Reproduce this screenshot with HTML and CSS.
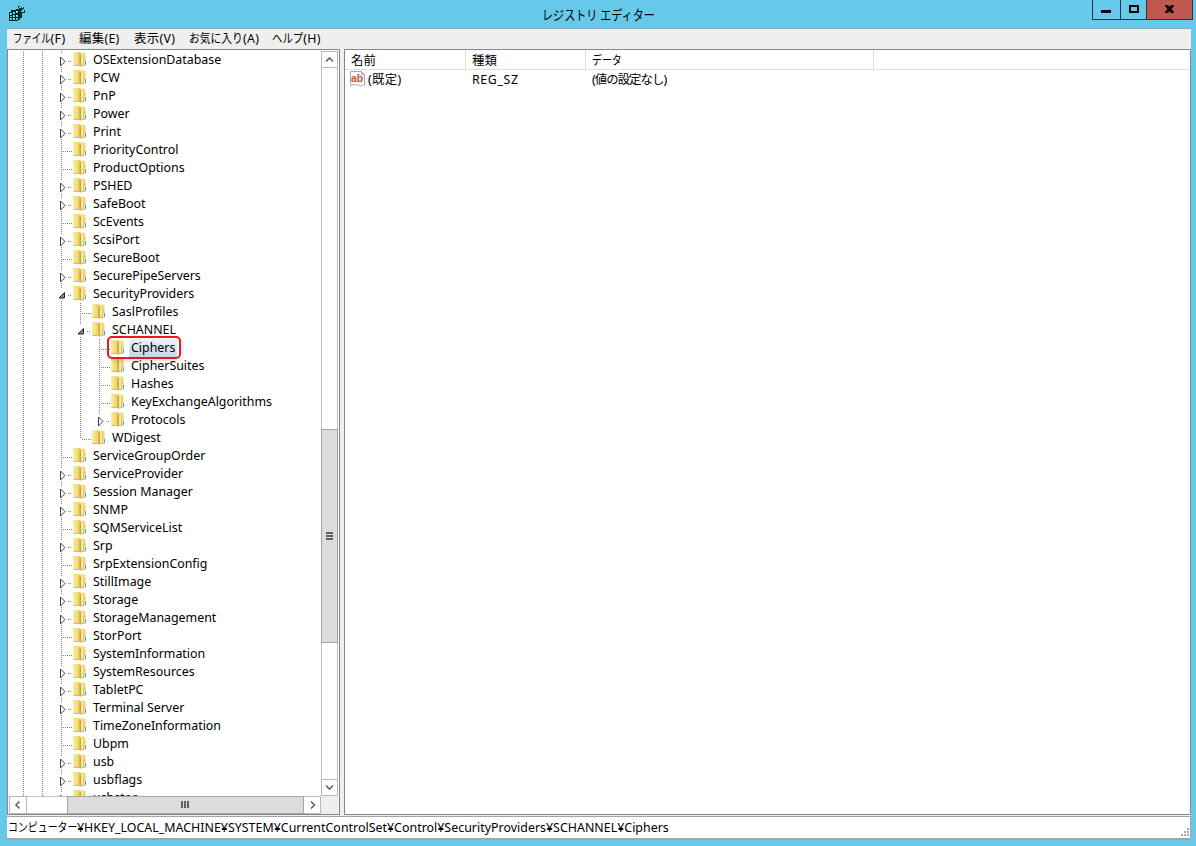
FILE: index.html
```html
<!DOCTYPE html>
<html lang="ja">
<head>
<meta charset="utf-8">
<title>レジストリ エディター</title>
<link rel="stylesheet" href="styles.css">
</head>
<body>
<svg class="defs" aria-hidden="true">
  <defs>
    <linearGradient id="gold" x1="0" x2="1"><stop offset="0" stop-color="#fcf0a4"/><stop offset="1" stop-color="#e6c95f"/></linearGradient>
    <linearGradient id="goldDark" x1="0" x2="0" y1="0" y2="1"><stop offset="0" stop-color="#f2e08a"/><stop offset="1" stop-color="#dab94c"/></linearGradient>
  </defs>
  <symbol id="folder" viewBox="0 0 16 16">
    <path d="M6 1.500h5.500l1 1v12H6z" fill="url(#goldDark)"/>
    <path d="M0 1.500 1 1h5l1.500 1v13L6 15H1l-1-.5z" fill="url(#gold)"/>
    <path d="M6.500 2.500 8 4v11l-1.500.5z" fill="#c9a638"/>
    <path d="M8 4.500 10 3v12l-2 .5z" fill="#f6e9a0"/>
    <path d="M.5 14.500h6l1 .5 5-1" fill="none" stroke="#d9bb58"/>
    <path d="M11 9.500h2v5h-2z" fill="#dcecf2"/><path d="M12 10h1v4h-1z" fill="#4b9fd8"/>
  </symbol>
  <symbol id="closed" viewBox="0 0 19 18"><path d="M8.500 6v9l4.500-4.500z" fill="#fff" stroke="#404040"/></symbol>
  <symbol id="open" viewBox="0 0 19 18"><path d="M12.500 7.500v5.500h-5.500z" fill="#888" stroke="#262626"/></symbol>
</svg>
<div class="window">
  <header class="titlebar">
    <svg class="app-icon" viewBox="0 0 17 17" shape-rendering="crispEdges">
      <path d="M1 7h2V5h5V4h3V3h3v4h2V5h1v3h-3v5h-2v2h-2v1H1z" fill="#06262d"/>
      <path d="M2 8h2v2H2zM5 7h2v2H5zM8 6h2v2H8zM2 11h2v1H2zM2 13h2v2H2zM5 10h2v2H5zM5 13h2v2H5zM8 10h2v2H8zM8 13h2v2H8z" fill="#32d4d0"/>
      <path d="M2 8h1v1H2zM5 7h1v1H5zM8 6h1v1H8zM2 13h1v1H2zM5 11h1v1H5zM8 10h1v1H8zM5 13h1v1H5z" fill="#fff"/>
      <path d="M10 1h2v2h-2zM13 2h3v2h-3zM11 4h4v1h-4z" fill="#123d48"/><path d="M11 2h1v1h-1zM14 2h1v1h-1zM13 6h1v1h-1z" fill="#9ee"/>
    </svg>
    <h1 class="title">レジストリ エディター</h1>
    <div class="controls">
      <span class="control"><svg viewBox="0 0 27 19"><path d="M8 10h10v3H8z"/></svg></span>
      <span class="control control-max"><svg viewBox="0 0 25 19"><path d="M8 5h10v8H8zM10 7v4h6V7z" fill-rule="evenodd"/></svg></span>
      <span class="control control-close"><svg viewBox="0 0 45 19"><path d="M18 5h3l1.500 2L24 5h3v1l-2.500 3 2.500 3v1h-3l-1.500-2-1.500 2h-3v-1l2.500-3L18 6z"/></svg></span>
    </div>
  </header>
  <div class="client">
    <nav class="menu">
      <span class="m-file"><b class="kana">ファイル</b>(F)</span><span class="m-edit">編集(E)</span><span class="m-view">表示(V)</span><span class="m-fav"><b class="kana">お気に入り</b>(A)</span><span class="m-help"><b class="kana">ヘルプ</b>(H)</span>
    </nav>
    <main class="panes">
      <section class="tree-pane">
        <div class="tree">
          <div class="row"><i class="v"></i><i class="v"></i><svg class="x"><use href="#closed"/></svg><svg class="f"><use href="#folder"/></svg><span>OSExtensionDatabase</span></div>
          <div class="row"><i class="v"></i><i class="v"></i><svg class="x"><use href="#closed"/></svg><svg class="f"><use href="#folder"/></svg><span>PCW</span></div>
          <div class="row"><i class="v"></i><i class="v"></i><svg class="x"><use href="#closed"/></svg><svg class="f"><use href="#folder"/></svg><span>PnP</span></div>
          <div class="row"><i class="v"></i><i class="v"></i><svg class="x"><use href="#closed"/></svg><svg class="f"><use href="#folder"/></svg><span>Power</span></div>
          <div class="row"><i class="v"></i><i class="v"></i><svg class="x"><use href="#closed"/></svg><svg class="f"><use href="#folder"/></svg><span>Print</span></div>
          <div class="row"><i class="v"></i><i class="v"></i><i class="v t"></i><svg class="f"><use href="#folder"/></svg><span>PriorityControl</span></div>
          <div class="row"><i class="v"></i><i class="v"></i><i class="v t"></i><svg class="f"><use href="#folder"/></svg><span>ProductOptions</span></div>
          <div class="row"><i class="v"></i><i class="v"></i><svg class="x"><use href="#closed"/></svg><svg class="f"><use href="#folder"/></svg><span>PSHED</span></div>
          <div class="row"><i class="v"></i><i class="v"></i><svg class="x"><use href="#closed"/></svg><svg class="f"><use href="#folder"/></svg><span>SafeBoot</span></div>
          <div class="row"><i class="v"></i><i class="v"></i><i class="v t"></i><svg class="f"><use href="#folder"/></svg><span>ScEvents</span></div>
          <div class="row"><i class="v"></i><i class="v"></i><svg class="x"><use href="#closed"/></svg><svg class="f"><use href="#folder"/></svg><span>ScsiPort</span></div>
          <div class="row"><i class="v"></i><i class="v"></i><i class="v t"></i><svg class="f"><use href="#folder"/></svg><span>SecureBoot</span></div>
          <div class="row"><i class="v"></i><i class="v"></i><svg class="x"><use href="#closed"/></svg><svg class="f"><use href="#folder"/></svg><span>SecurePipeServers</span></div>
          <div class="row"><i class="v"></i><i class="v"></i><svg class="x"><use href="#open"/></svg><svg class="f"><use href="#folder"/></svg><span>SecurityProviders</span></div>
          <div class="row"><i class="v"></i><i class="v"></i><i class="v"></i><i class="v t"></i><svg class="f"><use href="#folder"/></svg><span>SaslProfiles</span></div>
          <div class="row"><i class="v"></i><i class="v"></i><i class="v"></i><svg class="x"><use href="#open"/></svg><svg class="f"><use href="#folder"/></svg><span>SCHANNEL</span></div>
          <div class="row selected"><i class="v"></i><i class="v"></i><i class="v"></i><i class="v"></i><i class="v t"></i><svg class="f"><use href="#folder"/></svg><span>Ciphers</span></div>
          <div class="row"><i class="v"></i><i class="v"></i><i class="v"></i><i class="v"></i><i class="v t"></i><svg class="f"><use href="#folder"/></svg><span>CipherSuites</span></div>
          <div class="row"><i class="v"></i><i class="v"></i><i class="v"></i><i class="v"></i><i class="v t"></i><svg class="f"><use href="#folder"/></svg><span>Hashes</span></div>
          <div class="row"><i class="v"></i><i class="v"></i><i class="v"></i><i class="v"></i><i class="v t"></i><svg class="f"><use href="#folder"/></svg><span>KeyExchangeAlgorithms</span></div>
          <div class="row"><i class="v"></i><i class="v"></i><i class="v"></i><i class="v"></i><svg class="x last"><use href="#closed"/></svg><svg class="f"><use href="#folder"/></svg><span>Protocols</span></div>
          <div class="row"><i class="v"></i><i class="v"></i><i class="v"></i><i class="l t"></i><svg class="f"><use href="#folder"/></svg><span>WDigest</span></div>
          <div class="row"><i class="v"></i><i class="v"></i><i class="v t"></i><svg class="f"><use href="#folder"/></svg><span>ServiceGroupOrder</span></div>
          <div class="row"><i class="v"></i><i class="v"></i><svg class="x"><use href="#closed"/></svg><svg class="f"><use href="#folder"/></svg><span>ServiceProvider</span></div>
          <div class="row"><i class="v"></i><i class="v"></i><svg class="x"><use href="#closed"/></svg><svg class="f"><use href="#folder"/></svg><span>Session Manager</span></div>
          <div class="row"><i class="v"></i><i class="v"></i><svg class="x"><use href="#closed"/></svg><svg class="f"><use href="#folder"/></svg><span>SNMP</span></div>
          <div class="row"><i class="v"></i><i class="v"></i><i class="v t"></i><svg class="f"><use href="#folder"/></svg><span>SQMServiceList</span></div>
          <div class="row"><i class="v"></i><i class="v"></i><svg class="x"><use href="#closed"/></svg><svg class="f"><use href="#folder"/></svg><span>Srp</span></div>
          <div class="row"><i class="v"></i><i class="v"></i><i class="v t"></i><svg class="f"><use href="#folder"/></svg><span>SrpExtensionConfig</span></div>
          <div class="row"><i class="v"></i><i class="v"></i><svg class="x"><use href="#closed"/></svg><svg class="f"><use href="#folder"/></svg><span>StillImage</span></div>
          <div class="row"><i class="v"></i><i class="v"></i><svg class="x"><use href="#closed"/></svg><svg class="f"><use href="#folder"/></svg><span>Storage</span></div>
          <div class="row"><i class="v"></i><i class="v"></i><svg class="x"><use href="#closed"/></svg><svg class="f"><use href="#folder"/></svg><span>StorageManagement</span></div>
          <div class="row"><i class="v"></i><i class="v"></i><i class="v t"></i><svg class="f"><use href="#folder"/></svg><span>StorPort</span></div>
          <div class="row"><i class="v"></i><i class="v"></i><i class="v t"></i><svg class="f"><use href="#folder"/></svg><span>SystemInformation</span></div>
          <div class="row"><i class="v"></i><i class="v"></i><svg class="x"><use href="#closed"/></svg><svg class="f"><use href="#folder"/></svg><span>SystemResources</span></div>
          <div class="row"><i class="v"></i><i class="v"></i><svg class="x"><use href="#closed"/></svg><svg class="f"><use href="#folder"/></svg><span>TabletPC</span></div>
          <div class="row"><i class="v"></i><i class="v"></i><svg class="x"><use href="#closed"/></svg><svg class="f"><use href="#folder"/></svg><span>Terminal Server</span></div>
          <div class="row"><i class="v"></i><i class="v"></i><i class="v t"></i><svg class="f"><use href="#folder"/></svg><span>TimeZoneInformation</span></div>
          <div class="row"><i class="v"></i><i class="v"></i><i class="v t"></i><svg class="f"><use href="#folder"/></svg><span>Ubpm</span></div>
          <div class="row"><i class="v"></i><i class="v"></i><svg class="x"><use href="#closed"/></svg><svg class="f"><use href="#folder"/></svg><span>usb</span></div>
          <div class="row"><i class="v"></i><i class="v"></i><svg class="x"><use href="#closed"/></svg><svg class="f"><use href="#folder"/></svg><span>usbflags</span></div>
          <div class="row"><i class="v"></i><i class="v"></i><svg class="x"><use href="#closed"/></svg><svg class="f"><use href="#folder"/></svg><span>usbstor</span></div>
        </div>
        <div class="vscroll">
          <span class="btn"><svg viewBox="0 0 15 15"><path d="m4 9.500 3.500-3.500L11 9.500"/></svg></span>
          <span class="thumb"><svg viewBox="0 0 15 15"><path d="M4 4h7M4 7h7M4 10h7"/></svg></span>
          <span class="btn"><svg viewBox="0 0 15 15"><path d="m4 5.500 3.500 3.500L11 5.500"/></svg></span>
        </div>
        <div class="hscroll">
          <span class="btn"><svg viewBox="0 0 15 15"><path d="M8.500 3.500 5 7l3.500 3.500"/></svg></span>
          <span class="thumb"><svg viewBox="0 0 15 15"><path d="M4 3v7M7 3v7M10 3v7"/></svg></span>
          <span class="btn"><svg viewBox="0 0 15 15"><path d="M6 3.500 9.500 7 6 10.500"/></svg></span>
        </div>
        <div class="corner"></div>
      </section>
      <section class="list-pane">
        <div class="list-row list-head"><span>名前</span><span>種類</span><span><b class="kana">データ</b></span></div>
        <div class="list-row list-item">
          <span><svg class="value-icon" viewBox="0 0 16 16"><path d="M.5.5h11l3 3v11l-2-1-2 2-2-2-2 1-2-1-4 1z" fill="#fafafa" stroke="#aaa"/><path d="M11.500.5v3h3" fill="none" stroke="#aaa"/><text x="1" y="11">ab</text></svg>(既定)</span>
          <span class="type">REG_SZ</span><span><b class="unset">(値の設定なし)</b></span>
        </div>
      </section>
    </main>
    <footer class="status"><span class="kana">コンピューター</span><span class="status-path">¥HKEY_LOCAL_MACHINE¥SYSTEM¥CurrentControlSet¥Control¥SecurityProviders¥SCHANNEL¥Ciphers</span>
      <svg class="grip" viewBox="0 0 9 9" shape-rendering="crispEdges"><path d="M6 0h2v2H6zM3 3h2v2H3zM6 3h2v2H6zM0 6h2v2H0zM3 6h2v2H3zM6 6h2v2H6z" fill="#aaa"/></svg>
    </footer>
  </div>
</div>
</body>
</html>
```
FILE: styles.css
```css
*, *::before, *::after { box-sizing: border-box; }
body { margin: 0; }
.defs { position: absolute; width: 0; height: 0; }
.window {
  width: 1196px; height: 846px; overflow: hidden;
  padding: 0 5px 6px 7px;
  display: flex; flex-direction: column;
  background: #66c9e9;
  font: 12.4px/18px "Noto Sans", "Noto Sans CJK JP", sans-serif;
  color: #000; white-space: nowrap;
}
/* Katakana and hiragana are set narrower than the kanji and Latin around them */
.kana { display: inline-block; font-weight: 400; transform: scaleX(.8); transform-origin: 0 50%; }
.titlebar { flex: none; height: 29px; display: grid; grid-template-columns: 535px 1fr 101px; align-items: start; border-bottom: 1px solid #86a9c4; }
.app-icon { width: 17px; height: 17px; margin: 5px 0 0 1px; }
.title { margin: 5px 0 0; font-size: 13.500px; font-weight: 400; line-height: 20px; transform: scaleX(.82); transform-origin: 0 50%; }
.controls { display: flex; height: 20px; margin-right: -3px; margin-left: 2px; border: solid #29333d; border-width: 0 0 1px 1px; width: 101px; }
.control { width: 28px; height: 19px; border-right: 1px solid #29333d; flex: none; }
.control svg { display: block; width: 100%; height: 19px; }
.control-max { width: 26px; }
.control-close { width: 46px; background: #c1584f; }
.client { flex: 1; min-height: 0; display: flex; flex-direction: column; background: #efefef; }
.menu { flex: none; height: 20px; display: flex; padding-left: 6px; line-height: 19px; letter-spacing: .3px; }
.menu .kana { letter-spacing: 0; }
.m-file { width: 66px; }
.m-file .kana { transform: scaleX(.76); margin-right: -12px; }
.m-edit { width: 55px; }
.m-view { width: 55px; }
.m-fav { width: 83px; }
.m-fav .kana { transform: scaleX(.87); margin-right: -8px; }
.m-help .kana { transform: scaleX(.84); margin-right: -6px; }
.panes { height: 766px; flex: none; display: grid; grid-template-columns: 333px 847px; column-gap: 4px; }
.tree-pane {
  min-width: 0; min-height: 0; background: #fff; border: 1px solid #828790; padding: 1px;
  display: grid; grid-template: 745px 18px / 312px 18px;
}
.tree { overflow: hidden; padding-left: 5px; }
.row { display: flex; height: 18px; line-height: 17px; }
.row i { width: 19px; height: 18px; position: relative; }
.v { background: repeating-linear-gradient(#808080 0 1px, transparent 1px 2px) 9px 0 / 1px 18px no-repeat; }
.l { background: repeating-linear-gradient(#808080 0 1px, transparent 1px 2px) 9px 0 / 1px 10px no-repeat; }
.t::after { content: ""; position: absolute; left: 10px; top: 10px; width: 10px; height: 1px; background: repeating-linear-gradient(90deg, transparent 0 1px, #808080 1px 2px); }
.x {
  width: 19px; height: 18px; flex: none;
  background:
    repeating-linear-gradient(#808080 0 1px, transparent 1px 2px) 9px 0 / 1px 4px no-repeat,
    linear-gradient(#808080, #808080) 9px 16px / 1px 1px no-repeat,
    repeating-linear-gradient(90deg, #808080 0 1px, transparent 1px 2px) 16px 10px / 3px 1px no-repeat;
}
.last { background-size: 1px 4px, 0 0, 3px 1px; }
.f { width: 16px; height: 16px; margin: 0 2px 0 2px; flex: none; }
.row span { padding: 0 2px; }
.selected { position: relative; }
.selected span { background: linear-gradient(#edf2f7, #c6d5ec); }
.selected::after { content: ""; position: absolute; left: 93px; top: -3px; width: 74px; height: 23px; border: 2px solid #ea1620; border-radius: 5px; box-shadow: 1px 2px 4px #0002; }
.btn, .thumb { display: grid; place-items: center; }
.btn { border: 1px solid #b9b9b9; }
.btn svg, .thumb svg { width: 15px; height: 15px; fill: none; stroke: #606060; stroke-width: 1.6; }
.thumb { background: #dcdcdc; border: 1px solid #a6a6a6; }
.thumb svg { stroke-width: 2; shape-rendering: crispEdges; }
.vscroll { width: 17px; display: grid; grid-template-rows: 17px 361px 214px 136px 17px; border: solid #c0c0c0; border-width: 0 1px; }
.vscroll > * { margin: 0 -1px; }
.vscroll .thumb { grid-row: 3; }
.vscroll .btn:last-child { grid-row: 5; }
.hscroll { height: 18px; display: grid; grid-template-columns: 18px 40px 237px 17px; border: solid #c0c0c0; border-width: 1px 0; }
.hscroll > * { margin: -1px 0; }
.hscroll .thumb { grid-column: 3; }
.hscroll .btn:last-child { grid-column: 4; border-left: 0; }
.corner { background: #efefef; }
.list-pane { background: #fff; border: 1px solid #828790; }
.list-row { display: grid; grid-template-columns: 121px 120px 288px; }
.list-row b { font-weight: 400; }
.list-head { height: 20px; line-height: 21px; border-bottom: 1px solid #dfdfdf; }
.list-head span { padding-left: 6px; border-right: 1px solid #dfdfdf; }
.list-item { line-height: 19px; }
.list-item span { display: flex; padding-left: 6px; }
.list-item span:first-child { padding-left: 5px; letter-spacing: .3px; }
.list-item .type { letter-spacing: .6px; }
.value-icon { width: 16px; height: 16px; margin: 1px 2px 0 0; }
.value-icon text { font: 700 10.500px "Liberation Sans", sans-serif; letter-spacing: 0; fill: #d8502d; }
.unset { letter-spacing: -.95px; }
.status {
  flex: 1; display: flex; align-items: center; position: relative;
  margin-top: 1px; padding-left: 1px; background: #fff;
  border: solid #a3a3ab; border-width: 1px 1px 2px 0;
}
.status .kana { width: 69px; }
.status-path { letter-spacing: .02px; }
.grip { position: absolute; right: 0; bottom: 1px; width: 9px; height: 9px; }
```
